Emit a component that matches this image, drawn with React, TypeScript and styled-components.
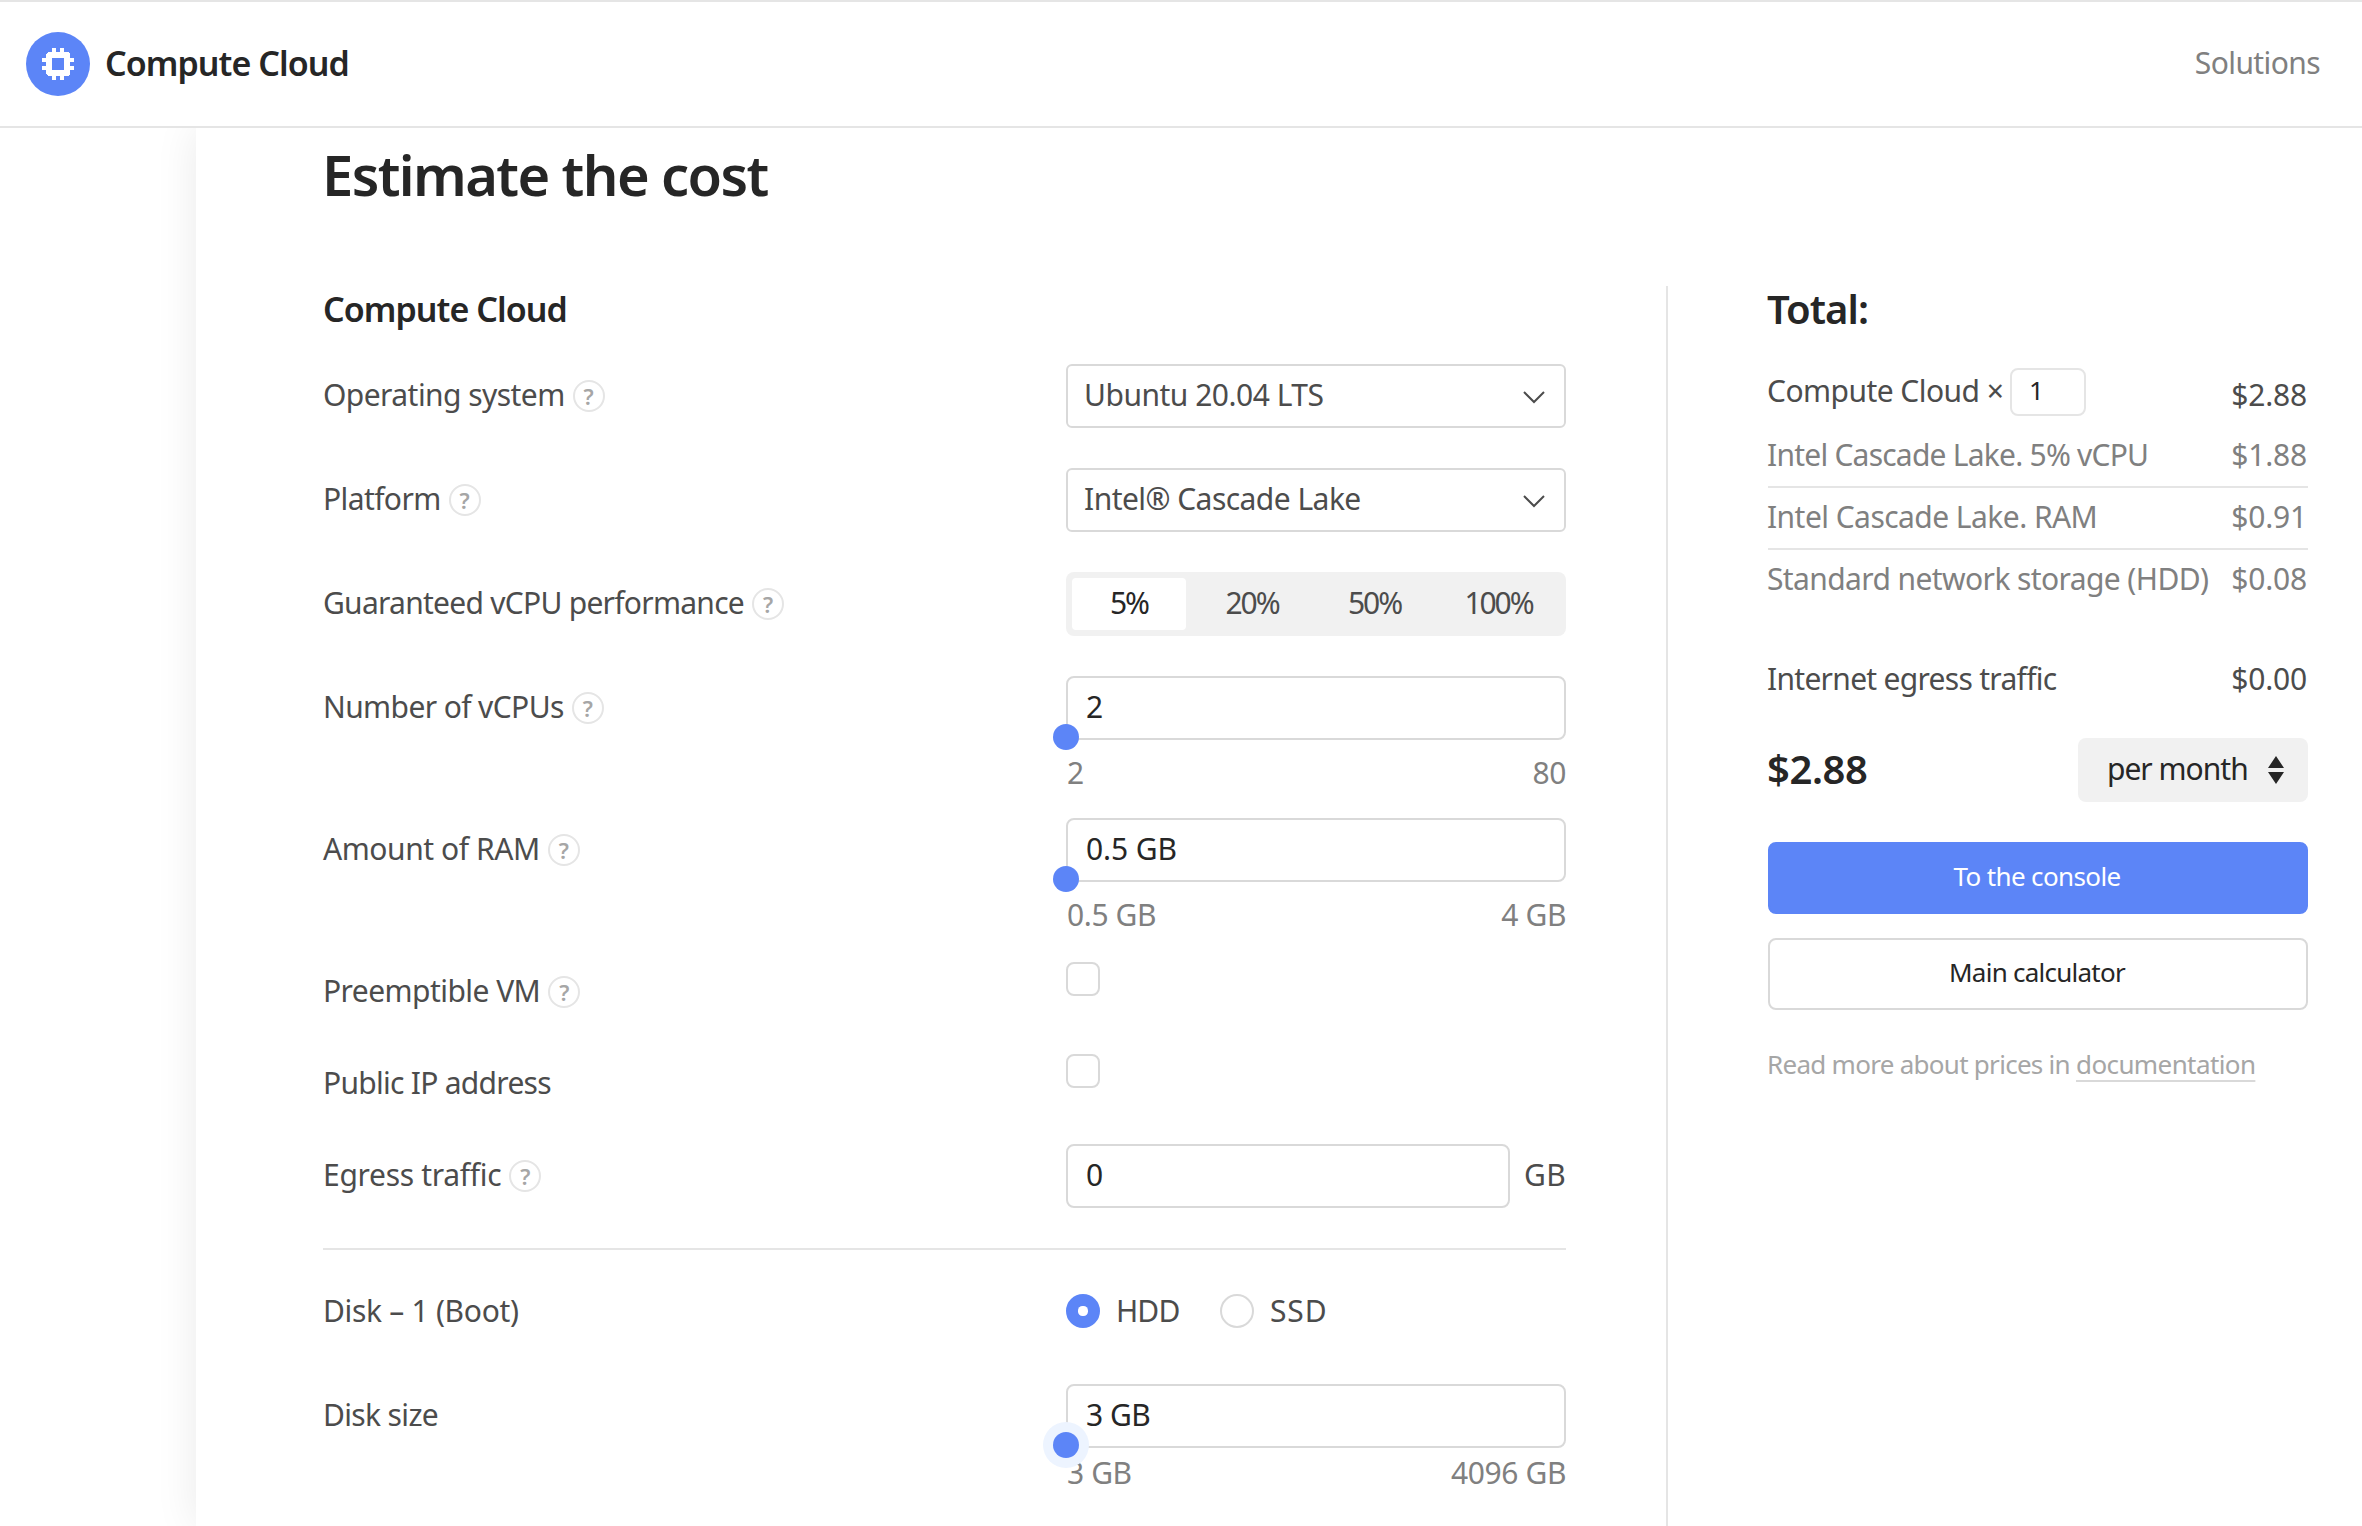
import React from "react";
import styled, { createGlobalStyle } from "styled-components";

const GlobalStyle = createGlobalStyle`
  * { box-sizing: border-box; }
  body {
    margin: 0;
    background: #fff;
    color: #4c4c4c;
    font-family: "Noto Sans", "Open Sans", sans-serif;
    font-size: 30px;
    overflow: hidden;
  }
`;

const Page = styled.div`
  display: flex;
  flex-direction: column;
  height: 1526px;
  overflow: hidden;
`;

const Header = styled.header`
  position: relative;
  z-index: 1;
  display: flex;
  align-items: flex-start;
  flex: none;
  height: 128px;
  padding: 0 42px 0 26px;
  background: #fff;
  border-top: 2px solid #e5e5e5;
  border-bottom: 2px solid #e5e5e5;
`;

const Logo = styled.span`
  display: flex;
  align-items: center;
  justify-content: center;
  width: 64px;
  height: 64px;
  margin: 30px 15px 0 0;
  border-radius: 50%;
  background: #5c85f7;
`;

const Brand = styled.span`
  font-size: 34px;
  font-weight: 600;
  line-height: 122px;
  letter-spacing: -0.95px;
  color: #262626;
`;

const NavLink = styled.a`
  margin-left: auto;
  line-height: 121px;
  letter-spacing: -0.6px;
  color: #808080;
`;

const Panel = styled.main`
  flex: 1;
  margin-left: 196px;
  padding: 0 54px 0 126px;
  background: #fff;
  box-shadow: 0 0 40px rgba(0, 0, 0, 0.085);
`;

const Title = styled.h1`
  margin: 0 0 66px;
  font-size: 56px;
  font-weight: 600;
  line-height: 92px;
  letter-spacing: -1.6px;
  color: #262626;
`;

const Columns = styled.div`
  display: grid;
  grid-template-columns: 1244px 642px;
  column-gap: 100px;
  height: 1240px;
`;

const Section = styled.h3`
  margin: 0 0 32px 1px;
  font-size: 34px;
  font-weight: 600;
  line-height: 46px;
  letter-spacing: -0.95px;
  color: #262626;
`;

const Form = styled.div`
  display: flex;
  flex-direction: column;
  gap: 40px;
`;

const Row = styled.div<{ $h?: number }>`
  display: grid;
  grid-template-columns: 744px 500px;
  align-items: start;
  height: ${p => p.$h ?? 64}px;
`;

const LabelBox = styled.div<{ $ls: number }>`
  display: flex;
  align-items: flex-start;
  gap: 8px;
  padding-left: 1px;
  line-height: 61px;
  letter-spacing: ${p => p.$ls}px;
  white-space: nowrap;
`;

const Help = styled.span`
  width: 32px;
  height: 32px;
  margin-top: 16px;
  border: 2px solid #e5e5e5;
  border-radius: 50%;
  font-size: 22px;
  font-weight: 600;
  line-height: 28px;
  letter-spacing: 0;
  text-align: center;
  color: #a6a6a6;
`;

const Select = styled.div<{ $ls: number }>`
  display: flex;
  justify-content: space-between;
  height: 64px;
  padding: 0 18px 0 16px;
  border: 2px solid #d9d9d9;
  border-radius: 6px;
  line-height: 57px;
  letter-spacing: ${p => p.$ls}px;
`;

const Chevron = styled.svg`
  width: 24px;
  height: 16px;
  margin-top: 24px;
  fill: none;
  stroke: #4c4c4c;
  stroke-width: 2;
`;

const Segments = styled.div`
  display: grid;
  grid-template-columns: 114px 132px 113px 1fr;
  height: 64px;
  padding: 6px 0 6px 6px;
  border-radius: 8px;
  background: #f1f1f1;
`;

const Segment = styled.button<{ $active?: boolean }>`
  height: 52px;
  padding: 0;
  border: 0;
  border-radius: 4px;
  font: inherit;
  line-height: 49px;
  letter-spacing: -2.1px;
  display: flex;
  justify-content: center;
  color: ${p => (p.$active ? "#262626" : "#4c4c4c")};
  background: ${p => (p.$active ? "#fff" : "transparent")};
`;

const Field = styled.div<{ $ls?: number }>`
  position: relative;
  flex: 1;
  height: 64px;
  padding: 0 18px;
  border: 2px solid #d9d9d9;
  border-radius: 8px;
  line-height: 57px;
  letter-spacing: ${p => p.$ls ?? -0.5}px;
  color: #262626;
`;

const Knob = styled.span<{ $focused?: boolean }>`
  position: absolute;
  left: -15px;
  bottom: -12px;
  width: 26px;
  height: 26px;
  border-radius: 50%;
  background: #5c85f7;
  box-shadow: ${p => (p.$focused ? "0 0 0 10px #edf4ff" : "none")};
  z-index: 1;
`;

const Range = styled.div<{ $top: number }>`
  display: flex;
  justify-content: space-between;
  margin-top: ${p => p.$top}px;
  padding-left: 1px;
  line-height: 41px;
  letter-spacing: -0.4px;
  color: #808080;
`;

const Check = styled.span<{ $round?: boolean; $on?: boolean }>`
  display: flex;
  align-items: center;
  justify-content: center;
  flex: none;
  width: 34px;
  height: 34px;
  margin-top: ${p => (p.$round ? 14 : 2)}px;
  border: 2px solid ${p => (p.$on ? "#5c85f7" : "#d9d9d9")};
  border-radius: ${p => (p.$round ? "50%" : "8px")};
  background: ${p => (p.$on ? "#5c85f7" : "#fff")};
`;

const Pip = styled.span`
  width: 10px;
  height: 10px;
  border-radius: 4.5px;
  background: #fff;
`;

const Inline = styled.div`
  display: flex;
  align-items: flex-start;
  line-height: 61px;
`;

const Unit = styled.span`
  margin-left: 14px;
  letter-spacing: 0.3px;
`;

const RadioText = styled.span<{ $ls: number; $w: number }>`
  width: ${p => p.$w}px;
  padding-left: 16px;
  letter-spacing: ${p => p.$ls}px;
`;

const Divider = styled.hr`
  width: 1243px;
  height: 2px;
  margin: 0 0 -10px 1px;
  border: 0;
  background: #e5e5e5;
`;

const Aside = styled.aside`
  border-left: 2px solid #e5e5e5;
  padding-left: 100px;
`;

const AsideTitle = styled.h2`
  margin: 0 0 37px -1px;
  font-size: 40px;
  font-weight: 600;
  line-height: 45px;
  letter-spacing: -0.92px;
  color: #262626;
`;

const CountRow = styled.div`
  display: flex;
  align-items: flex-start;
  height: 48px;
  margin-bottom: 10px;
`;

const CountLabel = styled.span`
  width: 243px;
  margin-left: -1px;
  line-height: 45px;
  letter-spacing: -0.55px;
`;

const Quantity = styled.span`
  width: 76px;
  height: 48px;
  padding-left: 17px;
  border: 2px solid #e5e5e5;
  border-radius: 8px;
  font-size: 26px;
  line-height: 40px;
  color: #262626;
`;

const Price = styled.span`
  margin: 0 1px 0 auto;
  letter-spacing: -0.2px;
`;

const CountPrice = styled(Price)`
  line-height: 53px;
`;

const Item = styled.div<{ $ls: number; $last?: boolean }>`
  display: flex;
  height: 62px;
  border-bottom: 2px solid ${p => (p.$last ? "transparent" : "#e5e5e5")};
  line-height: 57px;
  color: #808080;
  white-space: nowrap;
  & > span:first-child {
    margin-left: -1px;
    letter-spacing: ${p => p.$ls}px;
  }
`;

const Egress = styled(Item)`
  height: 57px;
  margin: 38px 0 31px;
  border: 0;
  color: #4c4c4c;
`;

const Sum = styled.div`
  display: flex;
  justify-content: space-between;
  height: 64px;
  margin-bottom: 40px;
  line-height: 61px;
  color: #262626;
`;

const SumValue = styled.strong`
  margin-left: -1px;
  font-size: 40px;
  font-weight: 600;
  letter-spacing: -0.42px;
`;

const Period = styled.div`
  display: flex;
  justify-content: space-between;
  width: 230px;
  height: 64px;
  padding: 0 24px 0 29px;
  border-radius: 8px;
  background: #f1f1f1;
  letter-spacing: -1px;
`;

const Arrows = styled.svg`
  width: 16px;
  height: 28px;
  margin-top: 18px;
  fill: #262626;
`;

const Button = styled.button<{ $primary?: boolean; $ls: number }>`
  display: flex;
  justify-content: center;
  width: 100%;
  height: 72px;
  margin: 0 0 24px;
  padding: 0 2px 0 0;
  border: 2px solid ${p => (p.$primary ? "#5c85f7" : "#d9d9d9")};
  border-radius: 8px;
  font: inherit;
  font-size: 26px;
  line-height: 64px;
  letter-spacing: ${p => p.$ls}px;
  color: ${p => (p.$primary ? "#fff" : "#262626")};
  background: ${p => (p.$primary ? "#5c85f7" : "#fff")};
`;

const Note = styled.p`
  margin: 32px 0 0 -1px;
  font-size: 26px;
  line-height: 44px;
  letter-spacing: -0.72px;
  color: #a6a6a6;
`;

const NoteLink = styled.a`
  letter-spacing: -0.6px;
  text-decoration: underline #d9d9d9 2px;
  text-underline-offset: 6px;
  text-decoration-skip-ink: none;
`;

const ChipIcon = () => (
  <svg width="32" height="32" viewBox="0 0 32 32" fill="#fff" shapeRendering="crispEdges">
    <path fillRule="evenodd" d="M10 0h4v4h4V0h4v4h4l2 2v4h4v4h-4v4h4v4h-4v4l-2 2h-4v4h-4v-4h-4v4h-4v-4H6l-2-2v-4H0v-4h4v-4H0v-4h4V6l2-2h4zM10 10v12h12V10z" />
  </svg>
);

const Down = () => (
  <Chevron viewBox="0 0 24 16">
    <path d="M2 2l10 10L22 2" />
  </Chevron>
);

const Label = ({ text, ls, help }: { text: string; ls: number; help?: boolean }) => (
  <LabelBox $ls={ls}>
    <span>{text}</span>
    {help && <Help>?</Help>}
  </LabelBox>
);

type SliderProps = { value: string; min: string; max: string; ls?: number; top?: number; focused?: boolean };

const Slider = ({ value, min, max, ls, top = 12, focused }: SliderProps) => (
  <div>
    <Field $ls={ls}>
      {value}
      <Knob $focused={focused} />
    </Field>
    <Range $top={top}>
      <span>{min}</span>
      <span>{max}</span>
    </Range>
  </div>
);

const items = [
  { name: "Intel Cascade Lake. 5% vCPU", price: "$1.88", ls: -0.77 },
  { name: "Intel Cascade Lake. RAM", price: "$0.91", ls: -0.55 },
  { name: "Standard network storage (HDD)", price: "$0.08", ls: -0.6 },
];

export default function App() {
  return (
    <Page>
      <GlobalStyle />
      <Header>
        <Logo><ChipIcon /></Logo>
        <Brand>Compute Cloud</Brand>
        <NavLink>Solutions</NavLink>
      </Header>
      <Panel>
        <Title>Estimate the cost</Title>
        <Columns>
          <section>
            <Section>Compute Cloud</Section>
            <Form>
              <Row>
                <Label text="Operating system" ls={-0.56} help />
                <Select $ls={-0.49}>Ubuntu 20.04 LTS<Down /></Select>
              </Row>
              <Row>
                <Label text="Platform" ls={-0.6} help />
                <Select $ls={-0.54}>Intel® Cascade Lake<Down /></Select>
              </Row>
              <Row>
                <Label text="Guaranteed vCPU performance" ls={-0.73} help />
                <Segments>
                  <Segment $active>5%</Segment>
                  <Segment>20%</Segment>
                  <Segment>50%</Segment>
                  <Segment>100%</Segment>
                </Segments>
              </Row>
              <Row $h={102}>
                <Label text="Number of vCPUs" ls={-0.61} help />
                <Slider value="2" min="2" max="80" />
              </Row>
              <Row $h={102}>
                <Label text="Amount of RAM" ls={-0.43} help />
                <Slider value="0.5 GB" min="0.5 GB" max="4 GB" ls={-0.1} />
              </Row>
              <Row $h={52}>
                <Label text="Preemptible VM" ls={-0.55} help />
                <Check />
              </Row>
              <Row $h={52}>
                <Label text="Public IP address" ls={-0.72} />
                <Check />
              </Row>
              <Row>
                <Label text="Egress traffic" ls={-0.3} help />
                <Inline>
                  <Field>0</Field>
                  <Unit>GB</Unit>
                </Inline>
              </Row>
              <Divider />
              <Row>
                <Label text="Disk – 1 (Boot)" ls={-0.3} />
                <Inline>
                  <Check $round $on><Pip /></Check>
                  <RadioText $ls={-0.86} $w={120}>HDD</RadioText>
                  <Check $round />
                  <RadioText $ls={0.9} $w={90}>SSD</RadioText>
                </Inline>
              </Row>
              <Row $h={102}>
                <Label text="Disk size" ls={-0.65} />
                <Slider value="3 GB" min="3 GB" max="4096 GB" top={4} focused />
              </Row>
            </Form>
          </section>
          <Aside>
            <AsideTitle>Total:</AsideTitle>
            <CountRow>
              <CountLabel>Compute Cloud ×</CountLabel>
              <Quantity>1</Quantity>
              <CountPrice>$2.88</CountPrice>
            </CountRow>
            {items.map((item, i) => (
              <Item key={item.name} $ls={item.ls} $last={i === items.length - 1}>
                <span>{item.name}</span>
                <Price>{item.price}</Price>
              </Item>
            ))}
            <Egress $ls={-0.71}>
              <span>Internet egress traffic</span>
              <Price>$0.00</Price>
            </Egress>
            <Sum>
              <SumValue>$2.88</SumValue>
              <Period>
                per month
                <Arrows viewBox="0 0 16 28">
                  <path d="M8 0l8 12H0zM8 28L0 16h16z" />
                </Arrows>
              </Period>
            </Sum>
            <Button $primary $ls={-0.63}>To the console</Button>
            <Button $ls={-0.75}>Main calculator</Button>
            <Note>
              Read more about prices in <NoteLink>documentation</NoteLink>
            </Note>
          </Aside>
        </Columns>
      </Panel>
    </Page>
  );
}
